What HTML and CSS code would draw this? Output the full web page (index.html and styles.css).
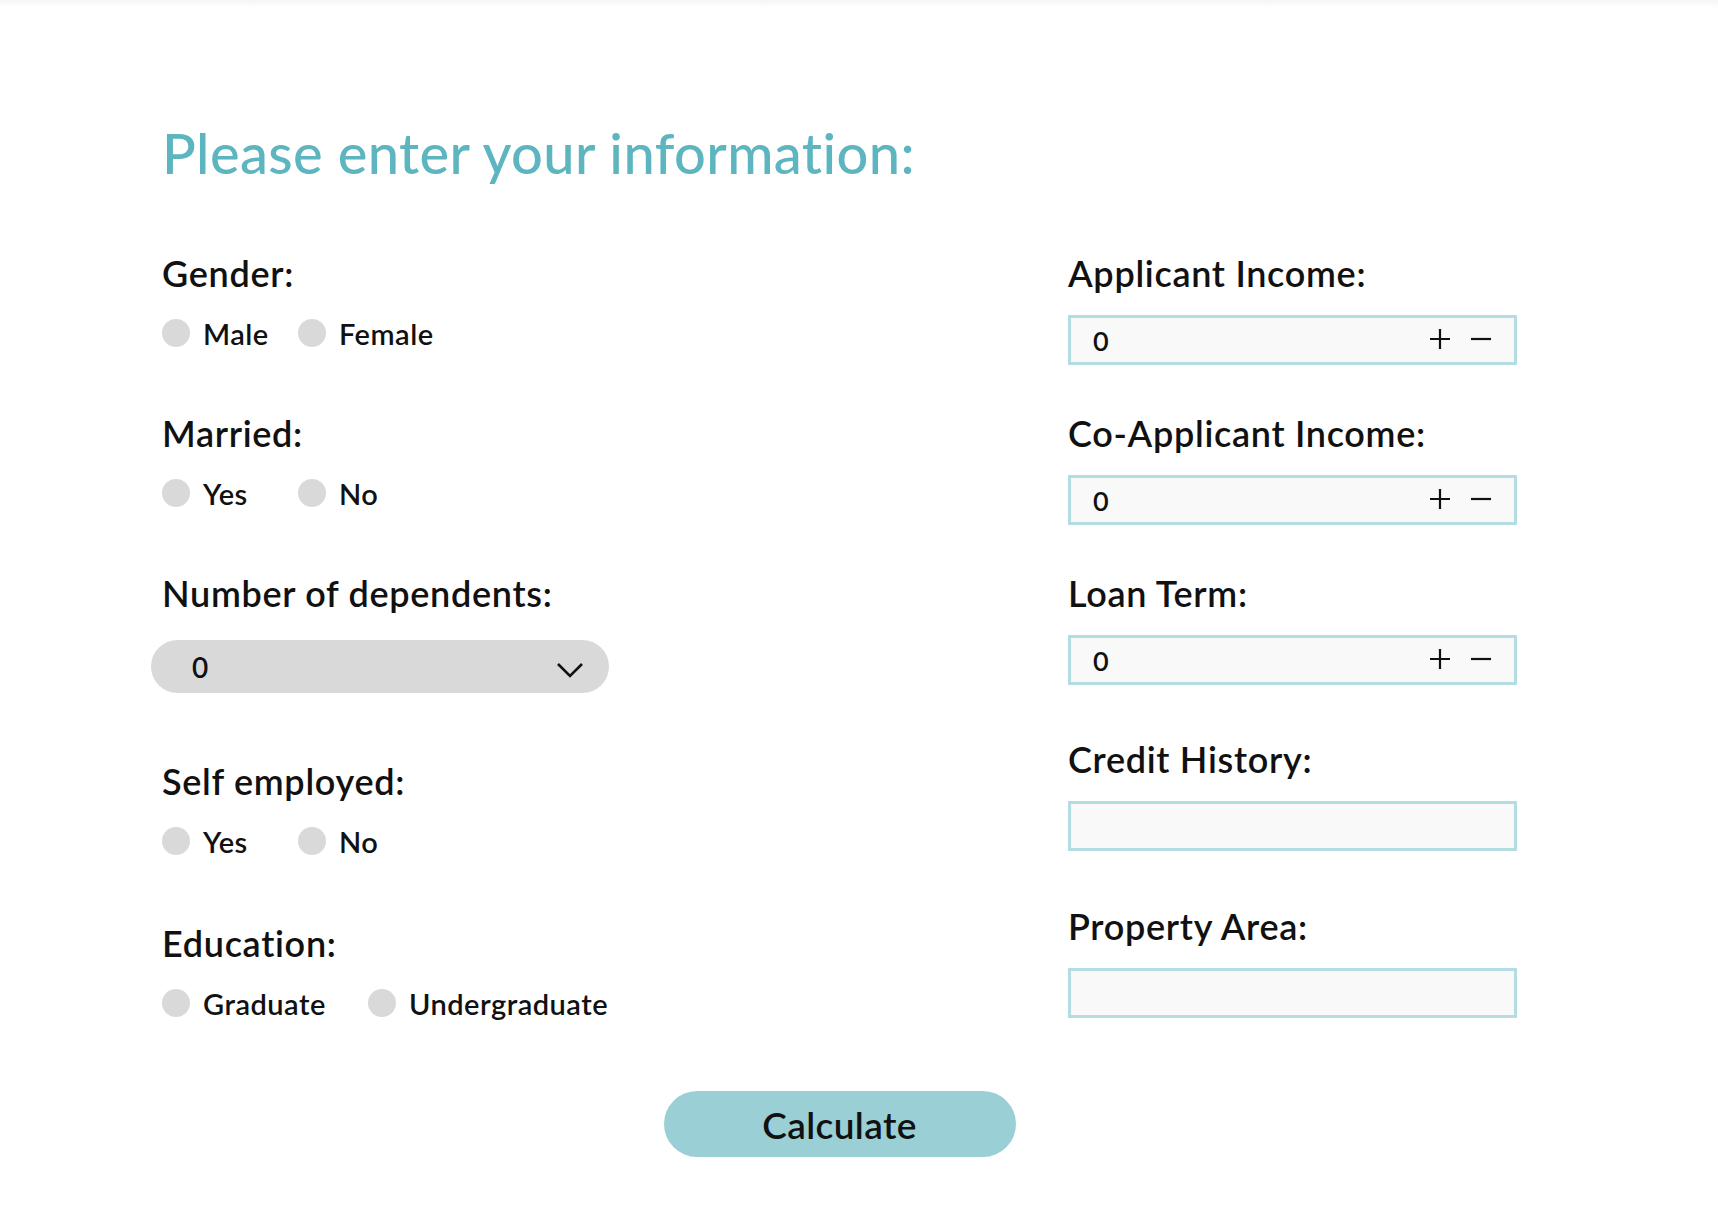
FILE: index.html
```html
<!DOCTYPE html>
<html lang="en">
<head>
    <meta charset="UTF-8">
    <meta name="viewport" content="width=device-width, initial-scale=1.0">
    <title>Loan Prediction</title>
    <link rel="stylesheet" href="styles.css">
</head>
<body>
    <div class="top-shade"></div>
    <div class="container">
        <h1>Please enter your information:</h1>

        <form id="loanForm" class="form-grid">
            <div class="col-left">
                <div class="field">
                    <div class="label">Gender:</div>
                    <div class="radio-row">
                        <label class="radio"><span class="dot"></span>Male</label>
                        <label class="radio"><span class="dot"></span>Female</label>
                    </div>
                </div>

                <div class="field">
                    <div class="label">Married:</div>
                    <div class="radio-row">
                        <label class="radio"><span class="dot"></span>Yes</label>
                        <label class="radio"><span class="dot"></span>No</label>
                    </div>
                </div>

                <div class="field">
                    <div class="label">Number of dependents:</div>
                    <div class="select">
                        <span>0</span>
                        <svg class="chevron" width="28" height="17" viewBox="0 0 28 17">
                            <path d="M2 2 L14 14 L26 2" fill="none" stroke="#111" stroke-width="2.6"/>
                        </svg>
                    </div>
                </div>

                <div class="field">
                    <div class="label">Self employed:</div>
                    <div class="radio-row">
                        <label class="radio"><span class="dot"></span>Yes</label>
                        <label class="radio"><span class="dot"></span>No</label>
                    </div>
                </div>

                <div class="field">
                    <div class="label">Education:</div>
                    <div class="radio-row">
                        <label class="radio wide"><span class="dot"></span>Graduate</label>
                        <label class="radio"><span class="dot"></span>Undergraduate</label>
                    </div>
                </div>
            </div>

            <div class="col-right">
                <div class="field">
                    <div class="label">Applicant Income:</div>
                    <div class="num-input">
                        <span class="value">0</span>
                        <svg class="step" width="22" height="22" viewBox="0 0 22 22"><path d="M11 1 V21 M1 11 H21" stroke="#111" stroke-width="2.2"/></svg>
                        <svg class="step" width="22" height="22" viewBox="0 0 22 22"><path d="M1 11 H21" stroke="#111" stroke-width="2.2"/></svg>
                    </div>
                </div>

                <div class="field">
                    <div class="label">Co-Applicant Income:</div>
                    <div class="num-input">
                        <span class="value">0</span>
                        <svg class="step" width="22" height="22" viewBox="0 0 22 22"><path d="M11 1 V21 M1 11 H21" stroke="#111" stroke-width="2.2"/></svg>
                        <svg class="step" width="22" height="22" viewBox="0 0 22 22"><path d="M1 11 H21" stroke="#111" stroke-width="2.2"/></svg>
                    </div>
                </div>

                <div class="field">
                    <div class="label">Loan Term:</div>
                    <div class="num-input">
                        <span class="value">0</span>
                        <svg class="step" width="22" height="22" viewBox="0 0 22 22"><path d="M11 1 V21 M1 11 H21" stroke="#111" stroke-width="2.2"/></svg>
                        <svg class="step" width="22" height="22" viewBox="0 0 22 22"><path d="M1 11 H21" stroke="#111" stroke-width="2.2"/></svg>
                    </div>
                </div>

                <div class="field">
                    <div class="label">Credit History:</div>
                    <div class="num-input"></div>
                </div>

                <div class="field">
                    <div class="label">Property Area:</div>
                    <div class="num-input"></div>
                </div>
            </div>
        </form>

        <div class="button-row">
            <button type="button" class="calc-btn">Calculate</button>
        </div>
    </div>
</body>
</html>
```

FILE: styles.css
```css
body {
    margin: 0;
    font-family: Lato, "Open Sans", Arial, sans-serif;
    color: #111;
    background: #fff;
}

.top-shade {
    height: 8px;
    background: linear-gradient(#f6f6f6, #fff);
}

.container {
    width: 1355px;
    margin-left: 162px;
}

h1 {
    margin: 110px 0 0 0;
    font-size: 56px;
    line-height: 70px;
    font-weight: 500;
    letter-spacing: 0.4px;
    color: #5db5bf;
}

.form-grid {
    display: grid;
    grid-template-columns: 906px 449px;
    margin-top: 65px;
}

.label {
    font-size: 36px;
    line-height: 40px;
    font-weight: 600;
    letter-spacing: 0.7px;
}

/* left column */
.col-left .field {
    margin-bottom: 60px;
}

.radio-row {
    display: flex;
    align-items: center;
    height: 40px;
    margin-top: 20px;
}

.radio {
    display: flex;
    align-items: center;
    min-width: 136px;
    font-size: 29px;
    font-weight: 600;
    letter-spacing: 0.5px;
}

.radio.wide {
    min-width: 206px;
}

.dot {
    width: 28px;
    height: 28px;
    border-radius: 50%;
    background: #d9d9d9;
    margin-right: 13px;
}

.select {
    display: flex;
    align-items: center;
    justify-content: space-between;
    width: 458px;
    height: 53px;
    margin: 27px 0 0 -11px;
    padding: 0 25px 0 41px;
    box-sizing: border-box;
    background: #d9d9d9;
    border-radius: 27px;
    font-size: 28px;
    font-weight: 600;
}

.chevron {
    margin-top: 8px;
}

.col-left .field:nth-child(3) {
    margin-bottom: 68px;
}

.col-left .field:nth-child(4) {
    margin-bottom: 62px;
}

/* right column */
.col-right .field {
    margin-bottom: 48px;
}

.col-right .field:nth-child(3) {
    margin-bottom: 54px;
}

.col-right .field:nth-child(4) {
    margin-bottom: 55px;
}

.num-input {
    display: flex;
    align-items: center;
    height: 50px;
    margin-top: 22px;
    padding: 0 22px 0 22px;
    box-sizing: border-box;
    background: #f9f9f9;
    border: 3px solid #b3dde2;
    font-size: 27px;
    font-weight: 600;
}

.num-input .value {
    flex: 1;
}

.num-input .step {
    margin-left: 19px;
    margin-top: -2px;
}

.button-row {
    display: flex;
    justify-content: center;
    margin-top: 8px;
}

.calc-btn {
    width: 352px;
    height: 66px;
    border: none;
    border-radius: 33px;
    background: #99cfd5;
    font-family: inherit;
    font-size: 37px;
    font-weight: 600;
    letter-spacing: 0.4px;
    color: #111;
    cursor: pointer;
}
```
